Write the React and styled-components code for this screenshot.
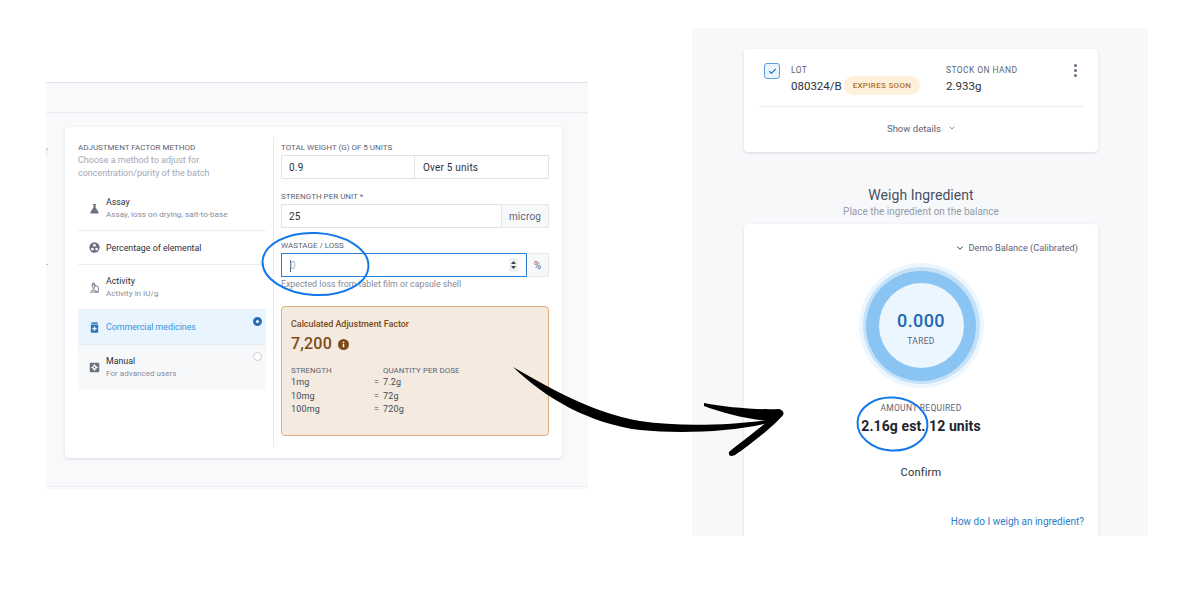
import React from "react";
import styled, { createGlobalStyle } from "styled-components";
import { Microscope, ChevronDown, Check } from "lucide-react";

const Global = createGlobalStyle`
  html, body { margin: 0; padding: 0; background: #fff; }
  body { font-family: Roboto, "Liberation Sans", sans-serif; color: #2b303b; }
`;

const Stage = styled.div`
  position: relative;
  width: 1200px;
  height: 600px;
  overflow: hidden;
  background: #fff;
  display: flex;
  align-items: flex-start;
  padding-left: 46px;
  gap: 104px;
  box-sizing: border-box;
`;

const LeftPanel = styled.section`
  width: 542px;
  height: 405px;
  margin-top: 82px;
  background: #f8f9fb;
  border-top: 1px solid #dcdfe5;
  box-sizing: border-box;
  display: flex;
  flex-direction: column;
  border-bottom: 1px solid #eceef2;
  box-shadow: 0 2px 0 #f8f9fb;
`;
const TopBar = styled.div`
  height: 29px;
  flex: none;
  border-bottom: 1px solid #e9ebef;
`;
const MethodCard = styled.div`
  width: 497px;
  height: 331px;
  margin: 14px 0 0 19px;
  background: #fff;
  border-radius: 4px;
  box-shadow: 0 1px 3px rgba(30, 40, 70, 0.14);
  display: flex;
  padding: 10px 13px 11px;
  box-sizing: border-box;
`;
const MethodColumn = styled.div`
  width: 195px;
  padding-top: 6px;
  flex: none;
`;
const Divider = styled.div`
  width: 1px;
  background: #e9ebef;
  flex: none;
  margin: 0 7px 0 0;
`;
const FormColumn = styled.div`
  width: 268px;
  padding-top: 6px;
  flex: none;
`;
const Overline = styled.div`
  font-size: 8px;
  line-height: 10px;
  letter-spacing: 0;
  text-transform: uppercase;
  color: ${(p) => p.$color || "#5d6475"};
  white-space: nowrap;
`;
const MethodHint = styled.div`
  width: 150px;
  font-size: 9px;
  line-height: 13px;
  letter-spacing: 0;
  color: #a3a8b5;
  margin: 1px 0 10px;
`;
const MethodList = styled.div`
  width: 188px;
`;
const MethodRow = styled.div`
  position: relative;
  height: ${(p) => p.$h}px;
  display: flex;
  align-items: center;
  box-sizing: border-box;
  padding: 0 0 ${(p) => p.$lift || 0}px 10.5px;
  gap: 5.5px;
  background: ${(p) => (p.$active ? "#e8f5fe" : p.$muted ? "#f7f8fa" : "#fff")};
  border-bottom: 1px solid ${(p) => (p.$active ? "#e3edf5" : p.$muted ? "#f7f8fa" : "#eceef1")};
`;
const MethodIcon = styled.span`
  width: 11px;
  height: 11px;
  flex: none;
  display: flex;
  color: ${(p) => (p.$active ? "#2a75bd" : "#6d7280")};
  svg { width: 11px; height: 11px; display: block; }
`;
const MethodText = styled.div`
  display: flex;
  flex-direction: column;
  margin-left: 1px;
`;
const MethodTitle = styled.div`
  font-size: 8.8px;
  line-height: 12px;
  letter-spacing: 0;
  color: ${(p) => (p.$active ? "#3d8fd8" : "#2b303b")};
  white-space: nowrap;
`;
const MethodSub = styled.div`
  font-size: 8px;
  line-height: 13px;
  letter-spacing: 0.05px;
  color: #868c9a;
  white-space: nowrap;
`;
const Radio = styled.span`
  position: absolute;
  right: 4px;
  top: 7px;
  width: 9px;
  height: 9px;
  box-sizing: border-box;
  border-radius: 50%;
  background: #fff;
  border: ${(p) => (p.$on ? "3px solid #2a6fb5" : "1px solid #c9ccd3")};
`;
const Field = styled.div`
  margin-bottom: ${(p) => p.$gap ?? 13}px;
`;
const InputGroup = styled.div`
  display: flex;
  height: 24px;
  margin-top: 2px;
  box-sizing: border-box;
  border-radius: 2px;
  font-size: 10px;
  letter-spacing: 0.2px;
  color: #2b303b;
`;
const InputCell = styled.div`
  flex: ${(p) => (p.$w ? `0 0 ${p.$w}px` : 1)};
  display: flex;
  align-items: center;
  justify-content: space-between;
  box-sizing: border-box;
  padding: 0 7px 0 ${(p) => (p.$joined ? 8 : 7)}px;
  border: 1px solid #dfe2e7;
  border-left-width: ${(p) => (p.$joined ? 0 : 1)}px;
  background: #fff;
`;
const FocusCell = styled(InputCell)`
  border: 1.5px solid #2d7fd0;
  padding: 0 8px 0 7px;
`;
const Addon = styled.div`
  flex: 0 0 ${(p) => p.$w}px;
  display: flex;
  align-items: center;
  justify-content: center;
  box-sizing: border-box;
  background: #f7f8fa;
  border: 1px solid #e6e8ec;
  border-left-width: 0;
  color: #5d6475;
`;
const Caret = styled.span`
  color: #b3b7c2;
  font-size: 10px;
  line-height: 12px;
  border-left: 1px solid #5d6475;
  margin-left: 1px;
  margin-top: 1px;
  text-indent: -1px;
`;
const Spinner = styled.span`
  width: 9px;
  height: 14px;
  background: #f0f1f4;
  display: flex;
  align-items: center;
  justify-content: center;
  svg { width: 7px; height: 12px; display: block; }
`;
const Helper = styled.div`
  font-size: 8.8px;
  line-height: 12px;
  margin-top: 1px;
  letter-spacing: 0;
  color: #868c9a;
  white-space: nowrap;
`;
const FactorCard = styled.div`
  height: 130px;
  margin-top: 16px;
  box-sizing: border-box;
  padding: 12px 9px;
  background: #f4eadf;
  border: 1px solid #dcae7c;
  border-radius: 4px;
`;
const FactorTitle = styled.div`
  font-size: 9px;
  line-height: 11px;
  font-weight: 500;
  letter-spacing: -0.05px;
  color: #7c4a18;
  white-space: nowrap;
`;
const FactorValue = styled.div`
  display: flex;
  align-items: center;
  gap: 6px;
  margin: 4px 0 11.5px;
  font-size: 16px;
  line-height: 20px;
  font-weight: 500;
  letter-spacing: 0.2px;
  color: #7c4a18;
  svg { width: 11px; height: 11px; display: block; }
`;
const DoseTable = styled.div`
  display: grid;
  grid-template-columns: 83px 9px 1fr;
  grid-template-rows: 10px;
  grid-auto-rows: 13.5px;
  font-size: 9px;
  letter-spacing: 0.2px;
  align-items: center;
  color: #454b58;
`;
const FullCell = styled.div`
  grid-column: ${(p) => p.$col};
`;

const RightPanel = styled.section`
  width: 456px;
  height: 508px;
  margin-top: 28px;
  background: #f7f8fa;
  box-sizing: border-box;
  padding: 21px 50px 0 52px;
  overflow: hidden;
`;
const WhiteCard = styled.div`
  background: #fff;
  border-radius: 4px;
  box-shadow: 0 1px 3px rgba(30, 40, 70, 0.14);
  box-sizing: border-box;
`;
const LotCard = styled(WhiteCard)`
  height: 103px;
  padding: 0 14px 0 15px;
`;
const LotTop = styled.div`
  position: relative;
  height: 57px;
  display: flex;
  align-items: flex-start;
  border-bottom: 1px solid #eceef1;
`;
const CheckBox = styled.span`
  width: 16px;
  height: 16px;
  margin: 14px 11px 0 5px;
  box-sizing: border-box;
  border: 1px solid #5b9fe0;
  border-radius: 3px;
  background: #eaf4fd;
  color: #2a75cc;
  display: flex;
  align-items: center;
  justify-content: center;
  svg { width: 9px; height: 9px; display: block; }
`;
const LotCol = styled.div`
  width: ${(p) => p.$w}px;
  padding-top: 16px;
  flex: none;
`;
const LotLabel = styled(Overline)`
  font-size: 8.5px;
  line-height: 11px;
  letter-spacing: 0.4px;
`;
const LotValue = styled.div`
  display: flex;
  align-items: center;
  gap: 2px;
  margin-top: 0;
  height: 19px;
  font-size: 11.5px;
  letter-spacing: 0;
  color: #2b303b;
  white-space: nowrap;
`;
const Badge = styled.span`
  display: inline-flex;
  align-items: center;
  height: 19px;
  padding: 0 9px;
  border-radius: 10px;
  background: #fdf1dc;
  color: #b0722c;
  font-size: 8px;
  font-weight: 500;
  letter-spacing: 0.3px;
`;
const Kebab = styled.span`
  position: absolute;
  right: 7px;
  top: 15px;
  display: flex;
  flex-direction: column;
  gap: 2px;
  i { width: 3px; height: 3px; border-radius: 50%; background: #666c7a; display: block; }
`;
const ShowDetails = styled.div`
  height: 42px;
  display: flex;
  align-items: center;
  justify-content: center;
  gap: 7px;
  font-size: 9.5px;
  color: #5d6475;
  svg { width: 8px; height: 8px; display: block; }
`;
const Heading = styled.div`
  text-align: center;
  margin: 34px 0 5px;
`;
const HeadingTitle = styled.div`
  font-size: 14px;
  line-height: 18px;
  letter-spacing: 0.05px;
  color: #4a5060;
`;
const HeadingSub = styled.div`
  font-size: 10px;
  line-height: 14px;
  margin-top: 1px;
  color: #969baa;
`;
const WeighCard = styled(WhiteCard)`
  height: 340px;
  padding: 17px 14px 0;
  display: flex;
  flex-direction: column;
  align-items: center;
`;
const BalanceRow = styled.div`
  align-self: flex-end;
  display: flex;
  align-items: center;
  gap: 4px;
  font-size: 9.2px;
  line-height: 14px;
  color: #5d6475;
  padding-right: 6px;
  svg { width: 10px; height: 10px; display: block; color: #343a4a; }
`;
const Gauge = styled.div`
  width: 125px;
  height: 125px;
  margin-top: 8px;
  border-radius: 50%;
  background: #ebf6fe;
  display: flex;
  align-items: center;
  justify-content: center;
`;
const GaugeMid = styled.div`
  width: 117px;
  height: 117px;
  border-radius: 50%;
  background: #c4e1f8;
  display: flex;
  align-items: center;
  justify-content: center;
`;
const GaugeRing = styled.div`
  width: 110px;
  height: 110px;
  border-radius: 50%;
  background: #8ac4f2;
  display: flex;
  align-items: center;
  justify-content: center;
`;
const GaugeCore = styled.div`
  width: 85px;
  height: 85px;
  box-sizing: border-box;
  padding-top: 6px;
  border-radius: 50%;
  background: #ebf6fe;
  display: flex;
  flex-direction: column;
  align-items: center;
  justify-content: center;
`;
const GaugeValue = styled.div`
  font-size: 18px;
  line-height: 22px;
  font-weight: 500;
  letter-spacing: 0.4px;
  color: #2268b0;
`;
const GaugeLabel = styled.div`
  font-size: 8.5px;
  line-height: 12px;
  margin-top: 3px;
  letter-spacing: 0.3px;
  color: #5d6475;
`;
const AmountLabel = styled(Overline)`
  font-size: 8.5px;
  margin-top: 15px;
  letter-spacing: 0.3px;
`;
const AmountValue = styled.div`
  font-size: 14px;
  line-height: 18px;
  margin-top: 4px;
  font-weight: 700;
  letter-spacing: 0.1px;
  color: #20242e;
  white-space: nowrap;
`;
const Confirm = styled.div`
  font-size: 11px;
  line-height: 14px;
  margin-top: 31px;
  letter-spacing: 0.2px;
  color: #2b303b;
`;
const HelpLink = styled.div`
  align-self: flex-end;
  font-size: 10px;
  line-height: 14px;
  margin-top: 35px;
  color: #2f7cc4;
`;
const Overlay = styled.svg`
  position: absolute;
  left: 0;
  top: 0;
  pointer-events: none;
`;

const FlaskIcon = () => (
  <svg viewBox="0 0 12 12"><path fill="currentColor" d="M4.3 1h3.4v1H7.2v3l3.3 5.2c.3.5 0 1.3-.7 1.3H2.2c-.7 0-1-.8-.7-1.3L4.8 5V2h-.5z" /></svg>
);
const ElementIcon = () => (
  <svg viewBox="0 0 12 12">
    <circle cx="6" cy="6" r="5.6" fill="currentColor" />
    <circle cx="6" cy="3.6" r="1.5" fill="#fff" />
    <circle cx="3.7" cy="7.7" r="1.5" fill="#fff" />
    <circle cx="8.3" cy="7.7" r="1.5" fill="#fff" />
  </svg>
);
const BottleIcon = () => (
  <svg viewBox="0 0 12 12">
    <rect x="2.6" y="0.4" width="6.8" height="1.6" fill="currentColor" />
    <rect x="2" y="2.8" width="8" height="8.8" rx="0.8" fill="currentColor" />
    <path d="M5.3 5h1.4v1.6h1.6V8H6.7v1.6H5.3V8H3.7V6.6h1.6z" fill="#fff" />
  </svg>
);
const ManualIcon = () => (
  <svg viewBox="0 0 12 12">
    <rect x="0.8" y="0.8" width="10.4" height="10.4" rx="1.2" fill="currentColor" />
    <circle cx="6" cy="6" r="2.5" fill="#fff" />
    <path d="M5.4 2.4h1.2v7.2H5.4zM2.4 5.4h7.2v1.2H2.4z" fill="#fff" />
    <circle cx="6" cy="6" r="1" fill="currentColor" />
  </svg>
);
const InfoIcon = () => (
  <svg viewBox="0 0 12 12">
    <circle cx="6" cy="6" r="6" fill="#7c4a18" />
    <rect x="5.2" y="5.2" width="1.6" height="3.8" fill="#fff" />
    <rect x="5.2" y="2.9" width="1.6" height="1.5" fill="#fff" />
  </svg>
);

const App = () => (
  <Stage>
    <Global />
    <LeftPanel>
      <TopBar />
      <MethodCard>
        <MethodColumn>
          <Overline>Adjustment factor method</Overline>
          <MethodHint>Choose a method to adjust for concentration/purity of the batch</MethodHint>
          <MethodList>
            <MethodRow $h={41} $lift={4}>
              <MethodIcon><FlaskIcon /></MethodIcon>
              <MethodText>
                <MethodTitle>Assay</MethodTitle>
                <MethodSub>Assay, loss on drying, salt-to-base</MethodSub>
              </MethodText>
            </MethodRow>
            <MethodRow $h={34}>
              <MethodIcon><ElementIcon /></MethodIcon>
              <MethodText><MethodTitle>Percentage of elemental</MethodTitle></MethodText>
            </MethodRow>
            <MethodRow $h={45}>
              <MethodIcon><Microscope strokeWidth={2} /></MethodIcon>
              <MethodText>
                <MethodTitle>Activity</MethodTitle>
                <MethodSub>Activity in IU/g</MethodSub>
              </MethodText>
            </MethodRow>
            <MethodRow $h={35} $active>
              <MethodIcon $active><BottleIcon /></MethodIcon>
              <MethodText><MethodTitle $active>Commercial medicines</MethodTitle></MethodText>
              <Radio $on />
            </MethodRow>
            <MethodRow $h={45} $muted>
              <MethodIcon><ManualIcon /></MethodIcon>
              <MethodText>
                <MethodTitle>Manual</MethodTitle>
                <MethodSub>For advanced users</MethodSub>
              </MethodText>
              <Radio />
            </MethodRow>
          </MethodList>
        </MethodColumn>
        <Divider />
        <FormColumn>
          <Field>
            <Overline>Total weight (g) of 5 units</Overline>
            <InputGroup>
              <InputCell $w={134}>0.9</InputCell>
              <InputCell $joined>Over 5 units</InputCell>
            </InputGroup>
          </Field>
          <Field>
            <Overline>Strength per unit *</Overline>
            <InputGroup>
              <InputCell>25</InputCell>
              <Addon $w={47}>microg</Addon>
            </InputGroup>
          </Field>
          <Field $gap={0}>
            <Overline>Wastage / loss</Overline>
            <InputGroup>
              <FocusCell>
                <Caret>0</Caret>
                <Spinner>
                  <svg viewBox="0 0 7 12"><path d="M3.5 2 6 5H1zM3.5 10 1 7h5z" fill="#3c4250" /></svg>
                </Spinner>
              </FocusCell>
              <Addon $w={22}>%</Addon>
            </InputGroup>
            <Helper>Expected loss from tablet film or capsule shell</Helper>
          </Field>
          <FactorCard>
            <FactorTitle>Calculated Adjustment Factor</FactorTitle>
            <FactorValue>7,200 <InfoIcon /></FactorValue>
            <DoseTable>
              <FullCell $col="1"><Overline>Strength</Overline></FullCell>
              <FullCell $col="3"><Overline>Quantity per dose</Overline></FullCell>
              <FullCell $col="1">1mg</FullCell><FullCell $col="2">=</FullCell><FullCell $col="3">7.2g</FullCell>
              <FullCell $col="1">10mg</FullCell><FullCell $col="2">=</FullCell><FullCell $col="3">72g</FullCell>
              <FullCell $col="1">100mg</FullCell><FullCell $col="2">=</FullCell><FullCell $col="3">720g</FullCell>
            </DoseTable>
          </FactorCard>
        </FormColumn>
      </MethodCard>
    </LeftPanel>

    <RightPanel>
      <LotCard>
        <LotTop>
          <CheckBox><Check strokeWidth={3} /></CheckBox>
          <LotCol $w={155}>
            <LotLabel>Lot</LotLabel>
            <LotValue>080324/B <Badge>EXPIRES SOON</Badge></LotValue>
          </LotCol>
          <LotCol $w={100}>
            <LotLabel>Stock on hand</LotLabel>
            <LotValue>2.933g</LotValue>
          </LotCol>
          <Kebab><i /><i /><i /></Kebab>
        </LotTop>
        <ShowDetails>Show details <ChevronDown strokeWidth={2.2} /></ShowDetails>
      </LotCard>
      <Heading>
        <HeadingTitle>Weigh Ingredient</HeadingTitle>
        <HeadingSub>Place the ingredient on the balance</HeadingSub>
      </Heading>
      <WeighCard>
        <BalanceRow><ChevronDown strokeWidth={2.4} /> Demo Balance (Calibrated)</BalanceRow>
        <Gauge>
          <GaugeMid>
            <GaugeRing>
              <GaugeCore>
                <GaugeValue>0.000</GaugeValue>
                <GaugeLabel>TARED</GaugeLabel>
              </GaugeCore>
            </GaugeRing>
          </GaugeMid>
        </Gauge>
        <AmountLabel>Amount required</AmountLabel>
        <AmountValue>2.16g est. 12 units</AmountValue>
        <Confirm>Confirm</Confirm>
        <HelpLink>How do I weigh an ingredient?</HelpLink>
      </WeighCard>
    </RightPanel>

    <Overlay width="1200" height="600" viewBox="0 0 1200 600">
      <rect x="46" y="148" width="1.5" height="3" fill="#c9ccd3" />
      <rect x="46" y="153" width="1" height="1" fill="#b5b9c2" />
      <rect x="46" y="264" width="2" height="1" fill="#b5b9c2" />
      <ellipse cx="315.5" cy="264" rx="53" ry="31" fill="none" stroke="#1478ea" strokeWidth="2" transform="rotate(3 315.5 264)" />
      <ellipse cx="892.5" cy="424" rx="35" ry="26.5" fill="none" stroke="#1478ea" strokeWidth="2" transform="rotate(4 892.5 424)" />
      <path fill="#000" d="M513 367 C550 388 590 412 640 421 C680 427 730 425 767 420 L772 422 C735 432 680 434 640 430 C590 424 545 398 513 367 Z" />
      <path fill="#000" d="M704 403 C725 407 755 410 779 409 Q785 411 783 415 C775 425 750 445 735 455 Q728 458 729 452 C740 443 755 432 768 421 C745 419 720 412 704 406 Z" />
    </Overlay>
  </Stage>
);

export default App;
